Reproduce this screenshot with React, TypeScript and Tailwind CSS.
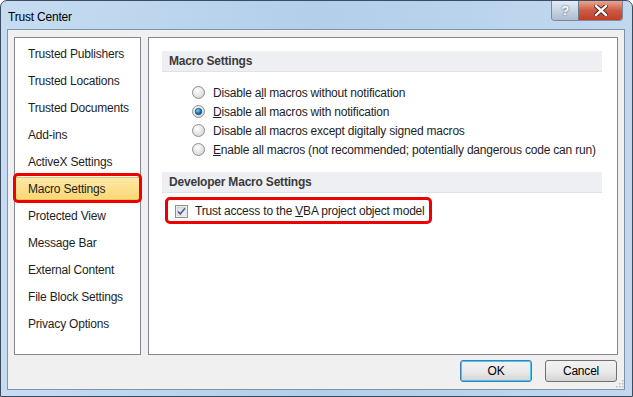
import type { ReactNode } from "react";

const navItems = [
  "Trusted Publishers",
  "Trusted Locations",
  "Trusted Documents",
  "Add-ins",
  "ActiveX Settings",
  "Macro Settings",
  "Protected View",
  "Message Bar",
  "External Content",
  "File Block Settings",
  "Privacy Options",
];

function Radio({ checked }: { checked?: boolean }) {
  return (
    <svg width="13" height="13" viewBox="0 0 13 13" className="shrink-0">
      <defs>
        <radialGradient id="rbg" cx="40%" cy="35%" r="70%">
          <stop offset="0%" stopColor="#ffffff" />
          <stop offset="100%" stopColor="#d4d4d4" />
        </radialGradient>
        <radialGradient id="rdot" cx="40%" cy="35%" r="65%">
          <stop offset="0%" stopColor="#7fd0fb" />
          <stop offset="60%" stopColor="#1a7fc4" />
          <stop offset="100%" stopColor="#0b4a7a" />
        </radialGradient>
      </defs>
      <circle cx="6.5" cy="6.5" r="6" fill="url(#rbg)" stroke="#8e8f8f" />
      {checked && <circle cx="6.5" cy="6.5" r="3.3" fill="url(#rdot)" stroke="#1c4a73" strokeWidth="0.6" />}
    </svg>
  );
}

function Checkbox() {
  return (
    <svg width="13" height="13" viewBox="0 0 13 13" className="shrink-0">
      <defs>
        <linearGradient id="cbg" x1="0" y1="0" x2="1" y2="1">
          <stop offset="0%" stopColor="#dcdcdc" />
          <stop offset="100%" stopColor="#f6f6f6" />
        </linearGradient>
      </defs>
      <rect x="0.5" y="0.5" width="12" height="12" fill="#ffffff" stroke="#8e8f8f" />
      <rect x="2" y="2" width="9" height="9" fill="url(#cbg)" stroke="#b8b8b8" strokeWidth="0.5" />
      <path d="M3 6.5 L5.3 9 L10 3.2" fill="none" stroke="#4a5f97" strokeWidth="1.6" />
    </svg>
  );
}

function SectionHeader({ children }: { children: ReactNode }) {
  return (
    <div className="h-[21px] flex items-center pl-[7px] bg-[#eeeff2] border-b border-[#dfe2e8] font-bold text-[#3b3b3b]">
      {children}
    </div>
  );
}

function RadioRow({ checked, children }: { checked?: boolean; children: ReactNode }) {
  return (
    <div className="h-[19px] flex items-center gap-[8px] whitespace-nowrap">
      <Radio checked={checked} />
      <span>{children}</span>
    </div>
  );
}

export default function App() {
  return (
    <div
      className="w-[633px] h-[397px] flex flex-col rounded-t-[7px] border border-[#3d4b5c] bg-gradient-to-r from-[#c6dcf2] via-[#b3cfea] to-[#c2d8ef] text-[12px] tracking-[-0.2px] text-[#1e1e1e]"
      style={{ fontFamily: '"Segoe UI", "Liberation Sans", Arial, sans-serif' }}
    >
      {/* title bar */}
      <div className="h-[28px] flex items-start shrink-0">
        <div className="pl-[7px] pt-[7px] text-[12px] text-black">Trust Center</div>
        <div className="ml-auto mr-[9px] flex border border-[#7c8a9c] border-t-0 rounded-b-[4px] overflow-hidden h-[20px]">
          <div className="w-[27px] h-full flex items-center justify-center bg-gradient-to-b from-[#e3ecf6] via-[#c7d4e3] to-[#aebccd] border-r border-[#6d7d90] text-white font-bold text-[13px] [text-shadow:0_0_2px_#2b3a4c]">
            ?
          </div>
          <div className="w-[43px] h-full flex items-center justify-center bg-gradient-to-b from-[#e8a593] via-[#cc5b44] to-[#c23d24]">
            <svg width="14" height="11" viewBox="0 0 14 11">
              <path d="M2 1 L12 10 M12 1 L2 10" stroke="#4b1a12" strokeWidth="4.2" strokeLinecap="square" />
              <path d="M2 1 L12 10 M12 1 L2 10" stroke="#ffffff" strokeWidth="2.4" strokeLinecap="square" />
            </svg>
          </div>
        </div>
      </div>

      {/* client area */}
      <div className="ml-[6px] mr-[7px] mb-[6px] flex-1 bg-[#f0f0f0] border border-[#7f93ab] flex flex-col px-[6px] pt-[7px]">
        <div className="flex gap-[7px] h-[318px]">
          {/* left nav */}
          <div className="w-[127px] shrink-0 bg-white border border-[#828790] pt-[2px]">
            {navItems.map((item) => {
              const active = item === "Macro Settings";
              return (
                <div key={item} className="h-[27px] flex items-center relative whitespace-nowrap">
                  {active ? (
                    <>
                      <div className="w-full h-[23px] flex items-center pl-[12px] bg-gradient-to-b from-[#fde8a6] to-[#fbd774] border border-[#e5c365]">
                        {item}
                      </div>
                      <div className="absolute left-[-2px] right-[-2px] top-[-2px] bottom-[-1px] border-[3px] border-[#ee0000] rounded-[5px]" />
                    </>
                  ) : (
                    <span className="pl-[13px]">{item}</span>
                  )}
                </div>
              );
            })}
          </div>

          {/* right content */}
          <div className="flex-1 min-w-0 bg-white border border-[#828790] pl-[13px] pr-[15px] pt-[13px]">
            <SectionHeader>Macro Settings</SectionHeader>
            <div className="pl-[30px] pt-[11px]">
              <RadioRow>
                Disable a<u>l</u>l macros without notification
              </RadioRow>
              <RadioRow checked>
                <u>D</u>isable all macros with notification
              </RadioRow>
              <RadioRow>
                Disable all macros except di<u>g</u>itally signed macros
              </RadioRow>
              <RadioRow>
                <u>E</u>nable all macros (not recommended; potentially dangerous code can run)
              </RadioRow>
            </div>
            <div className="mt-[13px]">
              <SectionHeader>Developer Macro Settings</SectionHeader>
            </div>
            <div className="pl-[13px] pt-[8px]">
              <div className="relative h-[20px] inline-flex items-center gap-[7px] whitespace-nowrap">
                <Checkbox />
                <span>
                  Trust access to the <u>V</u>BA project object model
                </span>
                <div className="absolute left-[-10px] right-[-7px] top-[-4px] bottom-[-3px] border-[3px] border-[#ee0000] rounded-[5px]" />
              </div>
            </div>
          </div>
        </div>

        {/* buttons */}
        <div className="flex justify-end gap-[13px] mt-[5px] pr-[1px] relative">
          <button className="w-[72px] h-[22px] rounded-[3px] border border-[#3c7fb1] bg-gradient-to-b from-[#f2f2f2] via-[#ebebeb] to-[#d5d5d5] shadow-[inset_0_0_0_1px_#48c6f2] text-black">
            OK
          </button>
          <button className="w-[72px] h-[22px] rounded-[3px] border border-[#707070] bg-gradient-to-b from-[#f2f2f2] via-[#ebebeb] to-[#d5d5d5] text-black">
            Cancel
          </button>
          <svg width="10" height="10" viewBox="0 0 10 10" className="absolute right-[-6px] bottom-[-6px]">
            {[
              [8, 2],
              [5, 5],
              [8, 5],
              [2, 8],
              [5, 8],
              [8, 8],
            ].map(([x, y]) => (
              <rect key={`${x}-${y}`} x={x} y={y} width="1.5" height="1.5" fill="#b9b9b9" />
            ))}
          </svg>
        </div>
      </div>
    </div>
  );
}
